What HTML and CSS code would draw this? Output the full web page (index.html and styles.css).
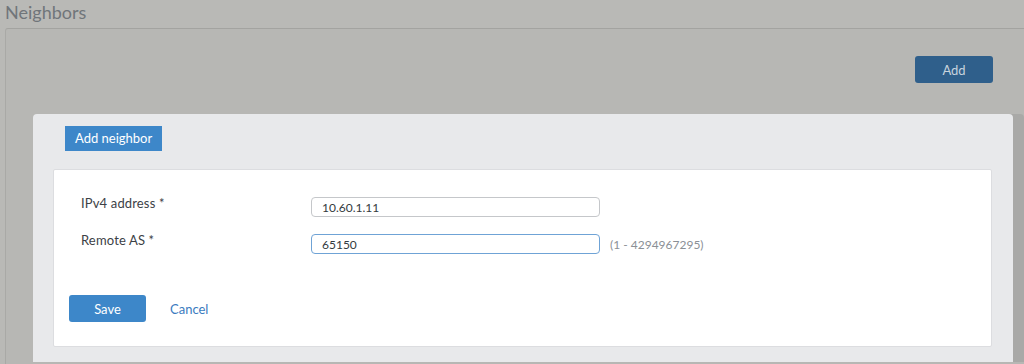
FILE: index.html
```html
<!DOCTYPE html>
<html>
<head>
<meta charset="utf-8">
<link rel="stylesheet" href="styles.css">
</head>
<body>
<div class="page">
  <h1 class="title">Neighbors</h1>
  <div class="panel">
    <div class="toolbar"><button class="btn-add">Add</button></div>
    <div class="modal">
      <div class="tab">Add neighbor</div>
      <div class="card">
        <div class="row">
          <label class="label">IPv4 address *</label>
          <input class="input" type="text" value="10.60.1.11">
        </div>
        <div class="row">
          <label class="label">Remote AS *</label>
          <input class="input focus" type="text" value="65150">
          <span class="hint">(1 - 4294967295)</span>
        </div>
        <div class="actions">
          <button class="btn-save">Save</button>
          <a class="cancel">Cancel</a>
        </div>
      </div>
    </div>
  </div>
</div>
</body>
</html>
```
FILE: styles.css
```css
html, body {
  margin: 0;
  padding: 0;
  background: #b9b9b6;
  font-family: Lato, "Open Sans", sans-serif;
  overflow: hidden;
}
.page {
  width: 1024px;
  height: 364px;
}
.title {
  margin: 0;
  height: 28px;
  padding-left: 5px;
  font-size: 18px;
  font-weight: 400;
  line-height: 24px;
  color: #70757a;
}
.panel {
  margin-left: 5px;
  border-top: 1px solid #a3a3a0;
  border-left: 1px solid #a9a9a6;
  border-top-left-radius: 3px;
  background: #b7b7b4;
  height: 335px;
}
.toolbar {
  display: flex;
  justify-content: flex-end;
  padding: 27px 31px 0 0;
  height: 58px;
  box-sizing: border-box;
}
.btn-add {
  width: 78px;
  height: 27px;
  border: none;
  border-radius: 3px;
  background: #2f5f8b;
  color: #c8d3de;
  font-family: inherit;
  font-size: 13px;
  padding: 0;
}
.modal {
  margin: 27px 0 0 27px;
  width: 980px;
  height: 248px;
  box-sizing: border-box;
  background: #e8e9eb;
  border-radius: 4px 4px 0 0;
  padding: 12px 21px 0 20px;
  box-shadow: 11px 0 0 #a9a9a7;
}
.tab {
  display: inline-block;
  vertical-align: top;
  margin-left: 12px;
  height: 25px;
  line-height: 25px;
  padding: 0 10px 0 10px;
  white-space: nowrap;
  background: #3d87c9;
  color: #fff;
  font-size: 13px;
}
.card {
  margin-top: 18px;
  background: #fff;
  border: 1px solid #dcdde0;
  border-radius: 2px;
  height: 178px;
  box-sizing: border-box;
  padding: 27px 0 0 0;
}
.row {
  display: flex;
  align-items: center;
  height: 20px;
  margin-bottom: 17px;
  padding-left: 27px;
}
.label {
  width: 230px;
  font-size: 13px;
  color: #3c4146;
  margin-top: -8px;
  letter-spacing: 0.15px;
}
.input {
  width: 289px;
  height: 20px;
  box-sizing: border-box;
  border: 1px solid #c5c7ca;
  border-radius: 4px;
  padding: 0 10px;
  font-family: inherit;
  font-size: 12px;
  color: #333a40;
  outline: none;
}
.input.focus {
  border-color: #6fa3d6;
}
.hint {
  margin-left: 10px;
  font-size: 12px;
  color: #8b9096;
}
.actions {
  display: flex;
  align-items: center;
  padding-left: 15px;
  margin-top: 41px;
}
.btn-save {
  width: 77px;
  height: 27px;
  border: none;
  border-radius: 3px;
  background: #3d87c9;
  color: #fff;
  font-family: inherit;
  font-size: 13px;
  padding: 0;
}
.cancel {
  margin-left: 24px;
  color: #3a7bc0;
  font-size: 13px;
}
```
